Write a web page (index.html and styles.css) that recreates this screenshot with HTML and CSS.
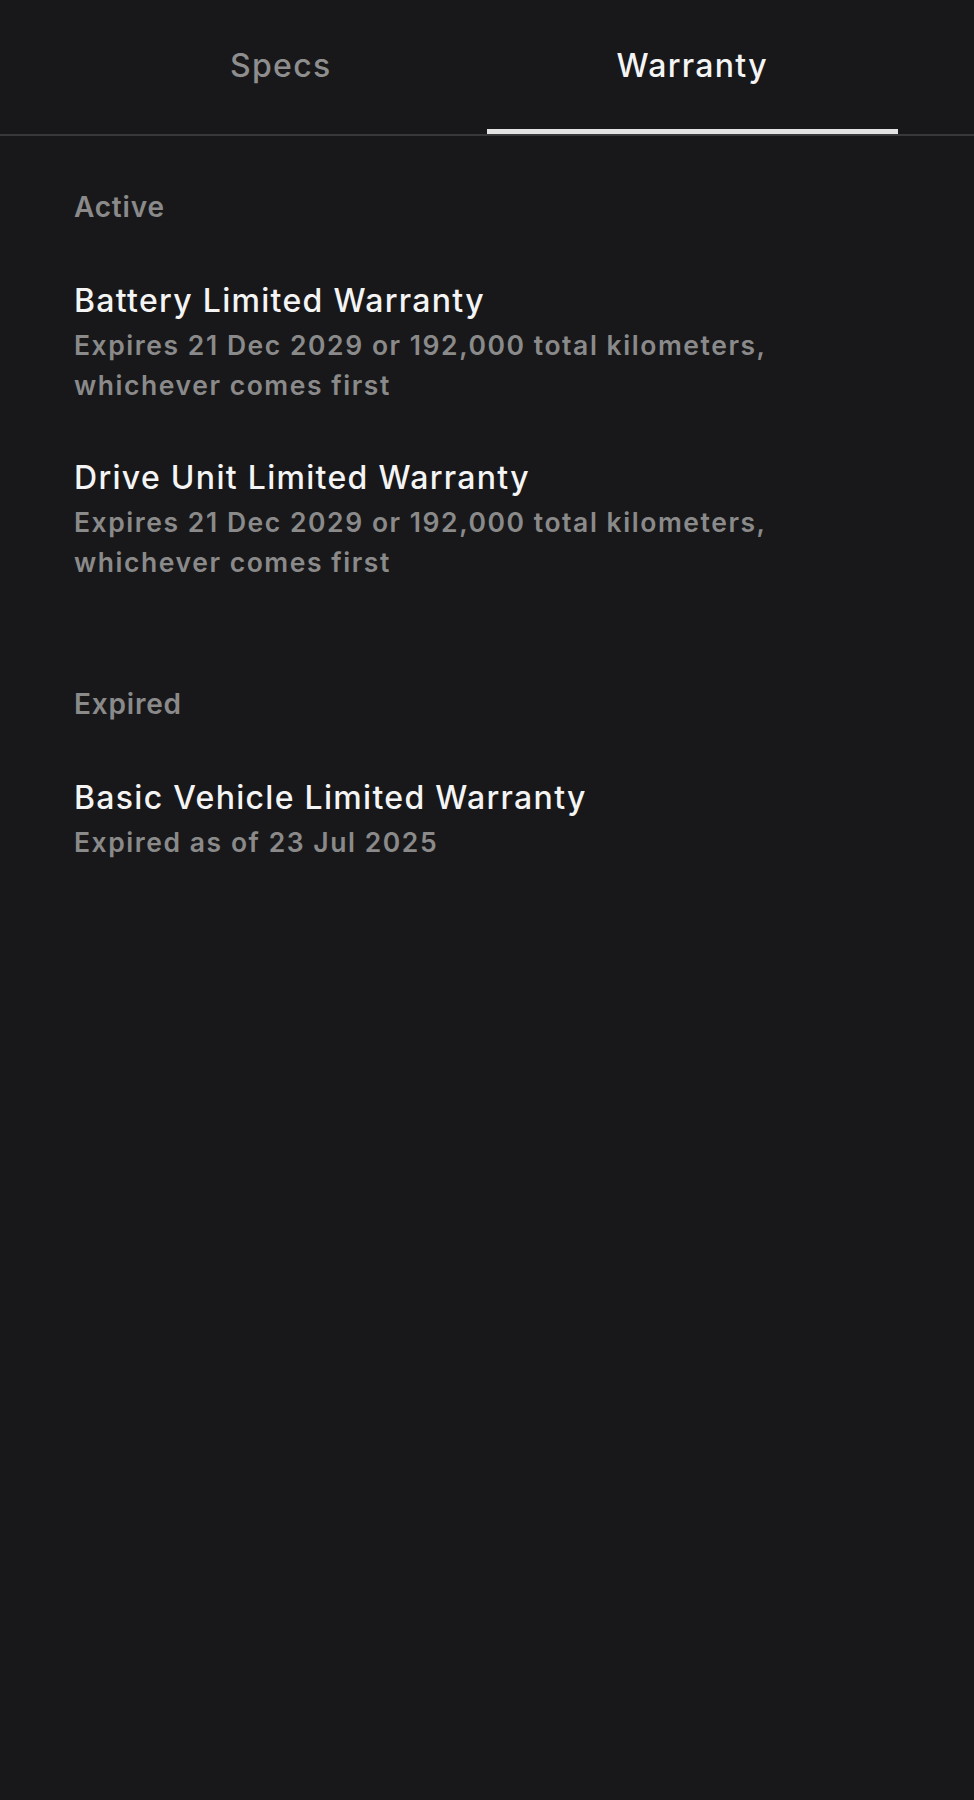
FILE: index.html
```html
<!DOCTYPE html>
<html lang="en">
<head>
<meta charset="utf-8">
<title>Warranty</title>
<link rel="stylesheet" href="styles.css">
</head>
<body>
<div class="tabs">
  <div class="tab">Specs</div>
  <div class="tab tab-active">Warranty</div>
</div>
<main class="content">
  <section class="section">
    <h2 class="section-title">Active</h2>
    <div class="items">
      <div class="item">
        <div class="item-title">Battery Limited Warranty</div>
        <div class="item-sub">Expires 21 Dec 2029 or 192,000 total kilometers,<br>whichever comes first</div>
      </div>
      <div class="item">
        <div class="item-title">Drive Unit Limited Warranty</div>
        <div class="item-sub">Expires 21 Dec 2029 or 192,000 total kilometers,<br>whichever comes first</div>
      </div>
    </div>
  </section>
  <section class="section">
    <h2 class="section-title">Expired</h2>
    <div class="items">
      <div class="item">
        <div class="item-title">Basic Vehicle Limited Warranty</div>
        <div class="item-sub">Expired as of 23 Jul 2025</div>
      </div>
    </div>
  </section>
</main>
</body>
</html>
```

FILE: styles.css
```css
html, body {
  margin: 0;
  padding: 0;
  background: #18181a;
}
body {
  font-family: Inter, "Liberation Sans", sans-serif;
  min-height: 1800px;
  color: #f4f4f4;
}
.tabs {
  display: flex;
  padding: 0 76px 0 75px;
  border-bottom: 2px solid #38383a;
}
.tab {
  flex: 1;
  box-sizing: border-box;
  height: 134px;
  padding-top: 47px;
  text-align: center;
  font-size: 32px;
  line-height: 38px;
  font-weight: 500;
  letter-spacing: 1.3px;
  color: #8e8e8e;
  border-bottom: 5px solid transparent;
}
.tab-active {
  color: #f4f4f4;
  border-bottom-color: #e2e2e2;
}
.content {
  padding: 54px 75px 0 74px;
  display: flex;
  flex-direction: column;
  gap: 105px;
}
.section-title {
  margin: 0 0 57px;
  font-size: 28px;
  line-height: 34px;
  font-weight: 600;
  letter-spacing: 0.8px;
  color: #8a8a8a;
}
.items {
  display: flex;
  flex-direction: column;
  gap: 53px;
}
.item-title {
  font-size: 32px;
  line-height: 40px;
  font-weight: 500;
  letter-spacing: 1.3px;
  color: #f4f4f4;
}
.item-sub {
  margin-top: 4px;
  font-size: 26.5px;
  line-height: 40px;
  font-weight: 600;
  letter-spacing: 1.55px;
  color: #8a8a8a;
}
```
